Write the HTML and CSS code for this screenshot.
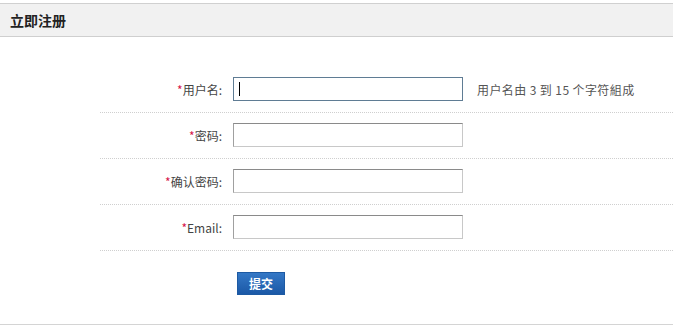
FILE: index.html
```html
<!DOCTYPE html>
<html lang="zh-CN">
<head>
<meta charset="utf-8">
<title>立即注册</title>
<link rel="stylesheet" href="styles.css">
</head>
<body>
<div class="panel">
  <div class="panel-head">立即注册</div>
  <form class="reg-form">
    <div class="row">
      <label class="label"><span class="req">*</span>用户名:</label>
      <span class="field-wrap">
        <input class="field focused" type="text">
        <span class="caret"></span>
      </span>
      <span class="hint">用户名由 3 到 15 个字符組成</span>
    </div>
    <div class="row">
      <label class="label"><span class="req">*</span>密码:</label>
      <input class="field" type="password">
    </div>
    <div class="row">
      <label class="label"><span class="req">*</span>确认密码:</label>
      <input class="field" type="password">
    </div>
    <div class="row">
      <label class="label"><span class="req">*</span>Email:</label>
      <input class="field" type="text">
    </div>
    <div class="actions">
      <button class="submit" type="button">提交</button>
    </div>
  </form>
</div>
</body>
</html>
```

FILE: styles.css
```css
html, body {
  margin: 0;
  padding: 0;
  background: #fff;
}
body {
  font-family: "Liberation Sans", "Noto Sans CJK SC", sans-serif;
  font-size: 12px;
  color: #333;
}
.panel {
  margin-top: 3px;
  border-bottom: 1px solid #d4d4d4;
  height: 322px;
  box-sizing: border-box;
  overflow: hidden;
}
.panel-head {
  height: 34px;
  line-height: 32px;
  box-sizing: border-box;
  background: #f1f1f1;
  border-top: 1px solid #d0d0d0;
  border-bottom: 1px solid #cfcfcf;
  padding-left: 10px;
  font-family: "Noto Sans CJK SC", sans-serif;
  font-weight: bold;
  font-size: 14px;
  color: #222;
  margin-bottom: 30px;
}
.reg-form {
  margin-left: 100px;
}
.row {
  display: flex;
  align-items: center;
  padding: 10px 0 11px;
  border-bottom: 1px dotted #cfcfcf;
}
.label {
  width: 122px;
  text-align: right;
  margin-right: 11px;
  color: #444;
  font-family: "Noto Sans CJK SC", sans-serif;
  font-size: 12px;
}
.req {
  color: #d6164b;
}
.field-wrap {
  position: relative;
  display: block;
  height: 24px;
}
.field {
  display: block;
  width: 230px;
  height: 24px;
  box-sizing: border-box;
  margin: 0;
  padding: 0 4px;
  border: 1px solid #c8c8c8;
  border-top-color: #8a8a8a;
  border-left-color: #a0a0a0;
  background: #fff;
  font-size: 12px;
  outline: none;
}
.field.focused {
  border: 1px solid #5f7c94;
}
.caret {
  position: absolute;
  left: 6px;
  top: 5px;
  width: 1px;
  height: 14px;
  background: #000;
}
.hint {
  margin-left: 14px;
  color: #555;
  font-family: "Noto Sans CJK SC", sans-serif;
  font-size: 12px;
  letter-spacing: 0.4px;
}
.actions {
  padding: 21px 0 0 137px;
}
.submit {
  width: 48px;
  height: 23px;
  border: 1px solid #1d5aa3;
  background: linear-gradient(#3478c6, #1b58a6);
  color: #fff;
  font-family: "Noto Sans CJK SC", sans-serif;
  font-weight: bold;
  font-size: 12px;
  padding: 0;
  cursor: pointer;
}
```
